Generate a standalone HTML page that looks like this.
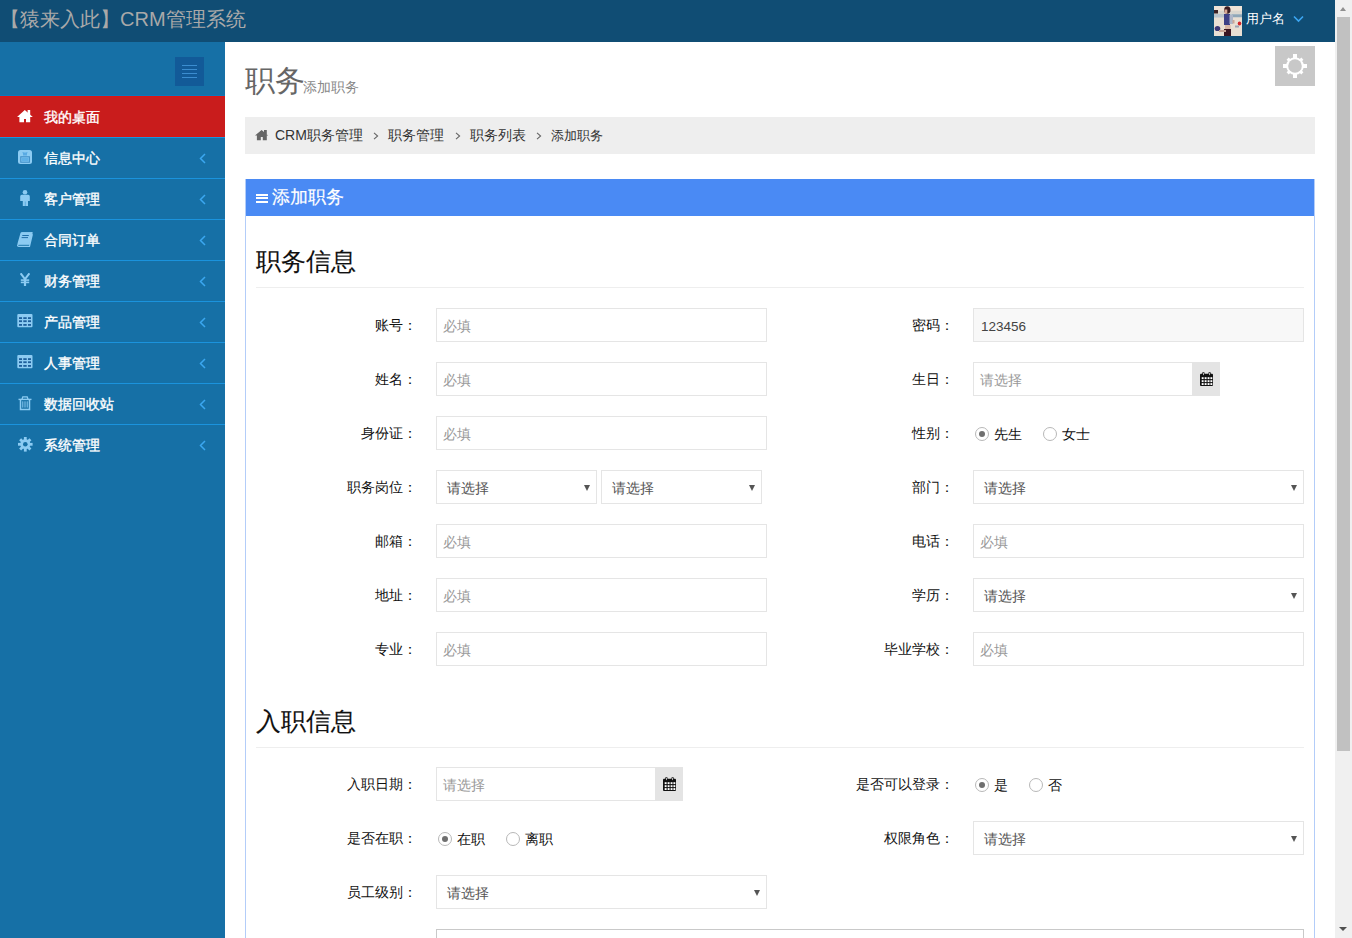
<!DOCTYPE html>
<html><head><meta charset="utf-8">
<style>
*{margin:0;padding:0;box-sizing:border-box;}
html,body{width:1352px;height:938px;overflow:hidden;background:#fff;font-family:"Liberation Sans",sans-serif;}
.a{position:absolute;}
.t{position:absolute;white-space:nowrap;line-height:1;}
#hdr{left:0;top:0;width:1335px;height:42px;background:#104d74;}
#side{left:0;top:42px;width:225px;height:896px;background:#1670a6;}
.slbl{position:absolute;left:44px;font-size:14px;line-height:14px;color:#fff;font-weight:400;-webkit-text-stroke:0.35px #fff;white-space:nowrap;}
.item{position:absolute;left:0;width:225px;height:41px;border-bottom:1px solid #2790d8;}
.item .lbl{position:absolute;left:44px;top:13px;font-size:14px;line-height:14px;color:#fff;font-weight:bold;}
.item .chev{position:absolute;left:199px;top:14px;}
.item .ic{position:absolute;left:16px;top:12px;}
#sb{left:1335px;top:0;width:17px;height:938px;background:#f0f0f0;}
.lab{position:absolute;font-size:14px;line-height:14px;color:#111;text-align:right;width:200px;}
.inp{position:absolute;height:34px;border:1px solid #e5e5e5;background:#fff;}
.ph{position:absolute;left:6px;top:10px;font-size:14px;line-height:14px;color:#999;white-space:nowrap;}
.sel .ph{left:10px;color:#555;}
.arr{position:absolute;top:14px;width:0;height:0;border-left:3.5px solid transparent;border-right:3.5px solid transparent;border-top:6px solid #555;}
.addon{position:absolute;width:28px;height:34px;background:#e4e4e4;}
.radio{position:absolute;width:14px;height:14px;border:1px solid #b8b8b8;border-radius:50%;background:#fff;}
.radio.on::after{content:"";position:absolute;left:3px;top:3px;width:6px;height:6px;border-radius:50%;background:#6f6f6f;}
.rl{position:absolute;font-size:14px;line-height:14px;color:#111;white-space:nowrap;}
</style></head>
<body>
<!-- header -->
<div id="hdr" class="a">
  <div class="t" style="left:0px;top:9px;font-size:20px;line-height:20px;color:#a9a9a9;">【猿来入此】CRM管理系统</div>
  <svg class="a" style="left:1214px;top:6px" width="28" height="30" viewBox="0 0 28 30"><defs><filter id="bl" x="-10%" y="-10%" width="120%" height="120%"><feGaussianBlur stdDeviation="0.45"/></filter><clipPath id="cp"><rect width="28" height="30"/></clipPath></defs><rect width="28" height="30" fill="#e9dfd3"/><g clip-path="url(#cp)" filter="url(#bl)">
<rect x="0" y="0" width="28" height="4" fill="#efe4d8"/>
<rect x="0" y="4" width="4" height="3.5" fill="#3b2426"/>
<rect x="4" y="5" width="24" height="3" fill="#d9d6cf"/>
<rect x="0" y="8" width="28" height="3.5" fill="#b9c4cc"/>
<rect x="18" y="8.5" width="10" height="2.5" fill="#8fa7b8"/>
<ellipse cx="13.3" cy="4" rx="3.2" ry="3.8" fill="#3a1c22"/>
<rect x="10.5" y="3.5" width="2.8" height="4" fill="#d9a894"/>
<rect x="10" y="8" width="6" height="11" fill="#3d3f86"/>
<rect x="15.5" y="9" width="3.5" height="9" fill="#aeb6c8"/>
<rect x="18.5" y="14" width="2" height="3.5" fill="#caa596"/>
<rect x="11" y="19" width="5.5" height="4" fill="#d8b6a6"/>
<rect x="10" y="23" width="7" height="7" fill="#3a1820"/>
<ellipse cx="3.5" cy="22.5" rx="2.8" ry="2.6" fill="#3c3776"/>
<rect x="5" y="24" width="7" height="2" fill="#c9a494"/>
<ellipse cx="25.5" cy="17.5" rx="1.8" ry="2" fill="#d4282a"/>
<rect x="21" y="19.5" width="4" height="2" fill="#9aa4b4"/>
</g></svg>
  <div class="t" style="left:1246px;top:12px;font-size:13px;line-height:13px;color:#fff;">用户名</div>
  <svg class="a" style="left:1293px;top:15px" width="11" height="8" viewBox="0 0 11 8"><path d="M1 1.5 L5.5 6 L10 1.5" stroke="#3ca6f2" stroke-width="1.6" fill="none"/></svg>
</div>

<!-- sidebar -->
<div id="side" class="a"></div>
<div class="a" style="left:175px;top:57px;width:29px;height:29px;background:#125a98;"><div class="a" style="left:7px;top:8px;width:15px;height:1px;background:#3b8dd0;"></div><div class="a" style="left:7px;top:12px;width:15px;height:1px;background:#3b8dd0;"></div><div class="a" style="left:7px;top:16px;width:15px;height:1px;background:#3b8dd0;"></div><div class="a" style="left:7px;top:20px;width:15px;height:1px;background:#3b8dd0;"></div></div>
<div class="a" style="left:0;top:95px;width:225px;height:1px;background:#0c78bc;"></div>
<div class="a" style="left:0;top:96px;width:225px;height:41px;background:#c91c1c;border-top:1px solid #dc1414;border-bottom:1px solid #dc1414;"></div>
<svg class="a" style="left:17px;top:110px" width="16" height="13" viewBox="0 0 16 13"><polygon points="7.8,0 0,6.9 2.4,6.9 2.4,12.2 7,12.2 7,9 9,9 9,12.2 13.2,12.2 13.2,6.9 15.8,6.9" fill="#fff"/><rect x="10.6" y="0" width="2.6" height="5" fill="#fff"/></svg>
<div class="slbl" style="top:110px;">我的桌面</div>
<div class="a" style="left:0;top:137px;width:225px;height:1px;background:#1b93dd;"></div>
<div class="a" style="left:0;top:178px;width:225px;height:1px;background:#1b93dd;"></div>
<div class="a" style="left:0;top:219px;width:225px;height:1px;background:#1b93dd;"></div>
<div class="a" style="left:0;top:260px;width:225px;height:1px;background:#1b93dd;"></div>
<div class="a" style="left:0;top:301px;width:225px;height:1px;background:#1b93dd;"></div>
<div class="a" style="left:0;top:342px;width:225px;height:1px;background:#1b93dd;"></div>
<div class="a" style="left:0;top:383px;width:225px;height:1px;background:#1b93dd;"></div>
<div class="a" style="left:0;top:424px;width:225px;height:1px;background:#1b93dd;"></div>
<div class="slbl" style="top:151px;">信息中心</div>
<svg class="a" style="left:18px;top:150px" width="14" height="14" viewBox="0 0 14 14"><rect x="0" y="0" width="14" height="14" rx="2.5" fill="#8ccbf2"/><rect x="2.8" y="6.8" width="8.6" height="5.4" fill="none" stroke="#3f8fc8" stroke-width="1.1"/><rect x="3.6" y="7.6" width="7" height="3.8" fill="#5fb0e6"/><path d="M5 2 L6 5.5 L7 2.5 L8 5.5 L9 2" stroke="#4da3e0" stroke-width="0.9" fill="none"/></svg>
<svg class="a" style="left:199px;top:153px" width="7" height="11" viewBox="0 0 7 11"><path d="M6 1 L1.5 5.5 L6 10" stroke="#3ba7f0" stroke-width="1.5" fill="none"/></svg>
<div class="slbl" style="top:192px;">客户管理</div>
<svg class="a" style="left:20px;top:189px" width="11" height="18" viewBox="0 0 11 18"><circle cx="5" cy="3.2" r="2.3" fill="#8ccbf2"/><path d="M1.8 5.8 H8.2 Q9.8 5.8 9.8 7.4 V12 H8 V17 H2.8 V12 H0.2 V7.4 Q0.2 5.8 1.8 5.8 Z" fill="#8ccbf2"/><path d="M5.3 12.5 V17" stroke="#4aa0da" stroke-width="0.7"/></svg>
<svg class="a" style="left:199px;top:194px" width="7" height="11" viewBox="0 0 7 11"><path d="M6 1 L1.5 5.5 L6 10" stroke="#3ba7f0" stroke-width="1.5" fill="none"/></svg>
<div class="slbl" style="top:233px;">合同订单</div>
<svg class="a" style="left:17px;top:232px" width="16" height="15" viewBox="0 0 16 15"><path d="M4.6 0.2 H14.6 Q15.2 0.2 15 1 L12.3 12.2 H1.6 Q0.4 12.6 0.6 13.5 Q0.9 14.3 2 14.3 H12.5 L15.4 2.2" fill="none" stroke="#8ccbf2" stroke-width="1.2"/><path d="M4.6 0.2 H14.6 Q15.2 0.2 15 1 L12.3 12.2 H1.2 Q0.3 12.2 0.5 11.4 L3.5 1 Q3.8 0.2 4.6 0.2 Z" fill="#8ccbf2"/><path d="M5.3 3.5 H11.8 M4.6 5.6 H11" stroke="#1f6ea8" stroke-width="1"/></svg>
<svg class="a" style="left:199px;top:235px" width="7" height="11" viewBox="0 0 7 11"><path d="M6 1 L1.5 5.5 L6 10" stroke="#3ba7f0" stroke-width="1.5" fill="none"/></svg>
<div class="slbl" style="top:274px;">财务管理</div>
<svg class="a" style="left:20px;top:273px" width="10" height="13" viewBox="0 0 10 13"><path d="M0.6 0.3 L5 6 L9.4 0.3" stroke="#8ccbf2" stroke-width="2" fill="none"/><rect x="0.8" y="6.3" width="8.4" height="1.6" fill="#8ccbf2"/><rect x="0.8" y="8.6" width="8.4" height="1.6" fill="#8ccbf2"/><rect x="3.9" y="5.5" width="2.2" height="7.5" fill="#8ccbf2"/></svg>
<svg class="a" style="left:199px;top:276px" width="7" height="11" viewBox="0 0 7 11"><path d="M6 1 L1.5 5.5 L6 10" stroke="#3ba7f0" stroke-width="1.5" fill="none"/></svg>
<div class="slbl" style="top:315px;">产品管理</div>
<svg class="a" style="left:17px;top:314px" width="16" height="14" viewBox="0 0 16 14"><rect x="0.3" y="0" width="15.2" height="13.3" rx="1" fill="#8ccbf2"/><g fill="#1d5f9c"><rect x="2" y="3.2" width="3" height="1.8"/><rect x="6.3" y="3.2" width="3.4" height="1.8"/><rect x="11" y="3.2" width="3" height="1.8"/><rect x="2" y="6.3" width="3" height="1.8"/><rect x="6.3" y="6.3" width="3.4" height="1.8"/><rect x="11" y="6.3" width="3" height="1.8"/><rect x="2" y="10" width="3" height="1.8"/><rect x="6.3" y="10" width="3.4" height="1.8"/><rect x="11" y="10" width="3" height="1.8"/></g></svg>
<svg class="a" style="left:199px;top:317px" width="7" height="11" viewBox="0 0 7 11"><path d="M6 1 L1.5 5.5 L6 10" stroke="#3ba7f0" stroke-width="1.5" fill="none"/></svg>
<div class="slbl" style="top:356px;">人事管理</div>
<svg class="a" style="left:17px;top:355px" width="16" height="14" viewBox="0 0 16 14"><rect x="0.3" y="0" width="15.2" height="13.3" rx="1" fill="#8ccbf2"/><g fill="#1d5f9c"><rect x="2" y="3.2" width="3" height="1.8"/><rect x="6.3" y="3.2" width="3.4" height="1.8"/><rect x="11" y="3.2" width="3" height="1.8"/><rect x="2" y="6.3" width="3" height="1.8"/><rect x="6.3" y="6.3" width="3.4" height="1.8"/><rect x="11" y="6.3" width="3" height="1.8"/><rect x="2" y="10" width="3" height="1.8"/><rect x="6.3" y="10" width="3.4" height="1.8"/><rect x="11" y="10" width="3" height="1.8"/></g></svg>
<svg class="a" style="left:199px;top:358px" width="7" height="11" viewBox="0 0 7 11"><path d="M6 1 L1.5 5.5 L6 10" stroke="#3ba7f0" stroke-width="1.5" fill="none"/></svg>
<div class="slbl" style="top:397px;">数据回收站</div>
<svg class="a" style="left:18px;top:396px" width="14" height="15" viewBox="0 0 14 15"><path d="M0.5 3.4 H13.5" stroke="#8ccbf2" stroke-width="1.4"/><path d="M4 3.2 L4.8 0.8 H9.2 L10 3.2" stroke="#8ccbf2" stroke-width="1.3" fill="none"/><path d="M2.5 3.6 V13.5 H11.5 V3.6" stroke="#8ccbf2" stroke-width="1.5" fill="none"/><path d="M4.8 5.3 V11.6 M7 5.3 V11.6 M9.2 5.3 V11.6" stroke="#8ccbf2" stroke-width="1"/></svg>
<svg class="a" style="left:199px;top:399px" width="7" height="11" viewBox="0 0 7 11"><path d="M6 1 L1.5 5.5 L6 10" stroke="#3ba7f0" stroke-width="1.5" fill="none"/></svg>
<div class="slbl" style="top:438px;">系统管理</div>
<svg class="a" style="left:18px;top:437px" width="15" height="15" viewBox="0 0 15 15"><g fill="#8ccbf2"><circle cx="7.3" cy="7.3" r="5"/><g id="tt"><rect x="5.9" y="0" width="2.8" height="14.6"/><rect x="0" y="5.9" width="14.6" height="2.8"/></g><rect x="5.9" y="0" width="2.8" height="14.6" transform="rotate(45 7.3 7.3)"/><rect x="5.9" y="0" width="2.8" height="14.6" transform="rotate(-45 7.3 7.3)"/></g><circle cx="7.3" cy="7.3" r="2.3" fill="#1670a6"/></svg>
<svg class="a" style="left:199px;top:440px" width="7" height="11" viewBox="0 0 7 11"><path d="M6 1 L1.5 5.5 L6 10" stroke="#3ba7f0" stroke-width="1.5" fill="none"/></svg>

<!-- scrollbar -->
<div id="sb" class="a">
  <div class="a" style="left:2px;top:17px;width:13px;height:734px;background:#c1c1c1;"></div>
  <div class="a" style="left:4.5px;top:7px;width:0;height:0;border-left:3.5px solid transparent;border-right:3.5px solid transparent;border-bottom:4px solid #8f8f8f;"></div>
  <div class="a" style="left:4px;top:927px;width:0;height:0;border-left:4.5px solid transparent;border-right:4.5px solid transparent;border-top:4px solid #505050;"></div>
</div>

<!-- content -->
<div id="content">
  <!-- settings -->
  <div class="a" style="left:1275px;top:46px;width:40px;height:40px;background:#c8c8c8;">
    <svg class="a" style="left:7px;top:7px" width="26" height="26" viewBox="0 0 26 26"><g fill="#fff"><circle cx="13" cy="13" r="8.8"/><rect x="11" y="1" width="4" height="24"/><rect x="1" y="11" width="24" height="4"/><rect x="11.5" y="2.6" width="3" height="20.8" transform="rotate(45 13 13)"/><rect x="11.5" y="2.6" width="3" height="20.8" transform="rotate(-45 13 13)"/></g><circle cx="13" cy="13" r="6.8" fill="#c8c8c8"/></svg>
  </div>
  <div class="t" style="left:245px;top:66px;font-size:30px;line-height:30px;color:#666;">职务</div>
  <div class="t" style="left:303px;top:80px;font-size:14px;line-height:14px;color:#888;">添加职务</div>

  <!-- breadcrumb -->
  <div class="a" style="left:245px;top:117px;width:1070px;height:37px;background:#eeeeee;">
    <svg class="a" style="left:10px;top:13px" width="14" height="11" viewBox="0 0 14 11"><polygon points="6.6,0 0,5.5 1.9,5.5 1.9,10.2 5.8,10.2 5.8,7 7.8,7 7.8,10.2 11.8,10.2 11.8,5.5 13.2,5.5" fill="#666"/><rect x="9" y="0" width="2.8" height="4" fill="#666"/></svg>
    <div class="t" style="left:30px;top:11px;font-size:14px;line-height:14px;color:#333;">CRM职务管理</div>
    <svg class="a" style="left:128px;top:15px" width="6" height="8" viewBox="0 0 6 8"><path d="M1 0.8 L4.6 4 L1 7.2" stroke="#666" stroke-width="1.1" fill="none"/></svg>
    <div class="t" style="left:143px;top:11px;font-size:14px;line-height:14px;color:#333;">职务管理</div>
    <svg class="a" style="left:210px;top:15px" width="6" height="8" viewBox="0 0 6 8"><path d="M1 0.8 L4.6 4 L1 7.2" stroke="#666" stroke-width="1.1" fill="none"/></svg>
    <div class="t" style="left:225px;top:11px;font-size:14px;line-height:14px;color:#333;">职务列表</div>
    <svg class="a" style="left:291px;top:15px" width="6" height="8" viewBox="0 0 6 8"><path d="M1 0.8 L4.6 4 L1 7.2" stroke="#666" stroke-width="1.1" fill="none"/></svg>
    <div class="t" style="left:306px;top:11.5px;font-size:13px;line-height:14px;color:#333;">添加职务</div>
  </div>

  <!-- panel -->
  <div class="a" style="left:245px;top:179px;width:1070px;height:800px;border-left:1px solid #b3cdf9;border-right:1px solid #b3cdf9;"></div>
  <div class="a" style="left:246px;top:179px;width:1068px;height:37px;background:#4a8af4;">
    <div class="a" style="left:10px;top:15px;width:12px;height:2px;background:#fff;"></div>
    <div class="a" style="left:10px;top:18px;width:12px;height:2px;background:#fff;"></div>
    <div class="a" style="left:10px;top:22px;width:12px;height:2px;background:#fff;"></div>
    <div class="t" style="left:26px;top:9px;font-size:18px;line-height:18px;color:#fff;-webkit-text-stroke:0.2px #fff;">添加职务</div>
  </div>

  <div class="t" style="left:256px;top:250px;font-size:24.5px;line-height:24px;color:#111;-webkit-text-stroke:0.12px #111;">职务信息</div>
  <div class="a" style="left:256px;top:287px;width:1048px;height:1px;background:#eeeeee;"></div>

  <div class="t" style="left:256px;top:710px;font-size:24.5px;line-height:24px;color:#111;-webkit-text-stroke:0.12px #111;">入职信息</div>
  <div class="a" style="left:256px;top:747px;width:1048px;height:1px;background:#eeeeee;"></div>

  <!-- rows section 1 -->
  <!--ROWS-->
<div class="lab" style="left:217px;top:318px;">账号：</div>
<div class="lab" style="left:754px;top:318px;">密码：</div>
<div class="lab" style="left:217px;top:372px;">姓名：</div>
<div class="lab" style="left:754px;top:372px;">生日：</div>
<div class="lab" style="left:217px;top:426px;">身份证：</div>
<div class="lab" style="left:754px;top:426px;">性别：</div>
<div class="lab" style="left:217px;top:480px;">职务岗位：</div>
<div class="lab" style="left:754px;top:480px;">部门：</div>
<div class="lab" style="left:217px;top:534px;">邮箱：</div>
<div class="lab" style="left:754px;top:534px;">电话：</div>
<div class="lab" style="left:217px;top:588px;">地址：</div>
<div class="lab" style="left:754px;top:588px;">学历：</div>
<div class="lab" style="left:217px;top:642px;">专业：</div>
<div class="lab" style="left:754px;top:642px;">毕业学校：</div>
<div class="inp" style="left:436px;top:308px;width:331px;"><div class="ph">必填</div></div>
<div class="inp" style="left:973px;top:308px;width:331px;background:#f8f8f8;"><div class="ph" style="color:#444;left:7px;font-size:13.5px;top:10.5px;">123456</div></div>
<div class="inp" style="left:436px;top:362px;width:331px;"><div class="ph">必填</div></div>
<div class="inp" style="left:973px;top:362px;width:220px;"><div class="ph">请选择</div></div>
<div class="addon" style="left:1192px;top:362px;"><svg style="position:absolute;left:8px;top:10px" width="13" height="14" viewBox="0 0 13 14"><rect x="0" y="1.8" width="13" height="12.2" rx="1" fill="#111"/><g fill="#fff"><rect x="1.7" y="5.2" width="1.9" height="1.9"/><rect x="4.65" y="5.2" width="1.9" height="1.9"/><rect x="7.6" y="5.2" width="1.9" height="1.9"/><rect x="10.4" y="5.2" width="1.9" height="1.9"/><rect x="1.7" y="8.2" width="1.9" height="1.9"/><rect x="4.65" y="8.2" width="1.9" height="1.9"/><rect x="7.6" y="8.2" width="1.9" height="1.9"/><rect x="10.4" y="8.2" width="1.9" height="1.9"/><rect x="1.7" y="11.1" width="1.9" height="1.9"/><rect x="4.65" y="11.1" width="1.9" height="1.9"/><rect x="7.6" y="11.1" width="1.9" height="1.9"/><rect x="10.4" y="11.1" width="1.9" height="1.9"/></g><rect x="2.3" y="0" width="2.2" height="3.8" rx="1" fill="#111"/><rect x="8.5" y="0" width="2.2" height="3.8" rx="1" fill="#111"/><rect x="3" y="0.7" width="0.8" height="2.4" fill="#ddd"/><rect x="9.2" y="0.7" width="0.8" height="2.4" fill="#ddd"/></svg></div>
<div class="inp" style="left:436px;top:416px;width:331px;"><div class="ph">必填</div></div>
<div class="radio on" style="left:975px;top:427px;"></div><div class="rl" style="left:994px;top:427px;">先生</div>
<div class="radio" style="left:1043px;top:427px;"></div><div class="rl" style="left:1062px;top:427px;">女士</div>
<div class="inp sel" style="left:436px;top:470px;width:161px;"><div class="ph">请选择</div><div class="arr" style="left:147px;"></div></div>
<div class="inp sel" style="left:601px;top:470px;width:161px;"><div class="ph">请选择</div><div class="arr" style="left:147px;"></div></div>
<div class="inp sel" style="left:973px;top:470px;width:331px;"><div class="ph">请选择</div><div class="arr" style="left:317px;"></div></div>
<div class="inp" style="left:436px;top:524px;width:331px;"><div class="ph">必填</div></div>
<div class="inp" style="left:973px;top:524px;width:331px;"><div class="ph">必填</div></div>
<div class="inp" style="left:436px;top:578px;width:331px;"><div class="ph">必填</div></div>
<div class="inp sel" style="left:973px;top:578px;width:331px;"><div class="ph">请选择</div><div class="arr" style="left:317px;"></div></div>
<div class="inp" style="left:436px;top:632px;width:331px;"><div class="ph">必填</div></div>
<div class="inp" style="left:973px;top:632px;width:331px;"><div class="ph">必填</div></div>
<div class="lab" style="left:217px;top:777px;">入职日期：</div>
<div class="inp" style="left:436px;top:767px;width:220px;"><div class="ph">请选择</div></div>
<div class="addon" style="left:655px;top:767px;"><svg style="position:absolute;left:8px;top:10px" width="13" height="14" viewBox="0 0 13 14"><rect x="0" y="1.8" width="13" height="12.2" rx="1" fill="#111"/><g fill="#fff"><rect x="1.7" y="5.2" width="1.9" height="1.9"/><rect x="4.65" y="5.2" width="1.9" height="1.9"/><rect x="7.6" y="5.2" width="1.9" height="1.9"/><rect x="10.4" y="5.2" width="1.9" height="1.9"/><rect x="1.7" y="8.2" width="1.9" height="1.9"/><rect x="4.65" y="8.2" width="1.9" height="1.9"/><rect x="7.6" y="8.2" width="1.9" height="1.9"/><rect x="10.4" y="8.2" width="1.9" height="1.9"/><rect x="1.7" y="11.1" width="1.9" height="1.9"/><rect x="4.65" y="11.1" width="1.9" height="1.9"/><rect x="7.6" y="11.1" width="1.9" height="1.9"/><rect x="10.4" y="11.1" width="1.9" height="1.9"/></g><rect x="2.3" y="0" width="2.2" height="3.8" rx="1" fill="#111"/><rect x="8.5" y="0" width="2.2" height="3.8" rx="1" fill="#111"/><rect x="3" y="0.7" width="0.8" height="2.4" fill="#ddd"/><rect x="9.2" y="0.7" width="0.8" height="2.4" fill="#ddd"/></svg></div>
<div class="lab" style="left:754px;top:777px;">是否可以登录：</div>
<div class="radio on" style="left:975px;top:778px;"></div><div class="rl" style="left:994px;top:778px;">是</div>
<div class="radio" style="left:1029px;top:778px;"></div><div class="rl" style="left:1048px;top:778px;">否</div>
<div class="lab" style="left:217px;top:831px;">是否在职：</div>
<div class="radio on" style="left:438px;top:832px;"></div><div class="rl" style="left:457px;top:832px;">在职</div>
<div class="radio" style="left:506px;top:832px;"></div><div class="rl" style="left:525px;top:832px;">离职</div>
<div class="lab" style="left:754px;top:831px;">权限角色：</div>
<div class="inp sel" style="left:973px;top:821px;width:331px;"><div class="ph">请选择</div><div class="arr" style="left:317px;"></div></div>
<div class="lab" style="left:217px;top:885px;">员工级别：</div>
<div class="inp sel" style="left:436px;top:875px;width:331px;"><div class="ph">请选择</div><div class="arr" style="left:317px;"></div></div>
<div class="inp" style="left:436px;top:929px;width:868px;height:40px;border-color:#c9c9c9;"></div>
<!--/ROWS-->
</div>
</body></html>
